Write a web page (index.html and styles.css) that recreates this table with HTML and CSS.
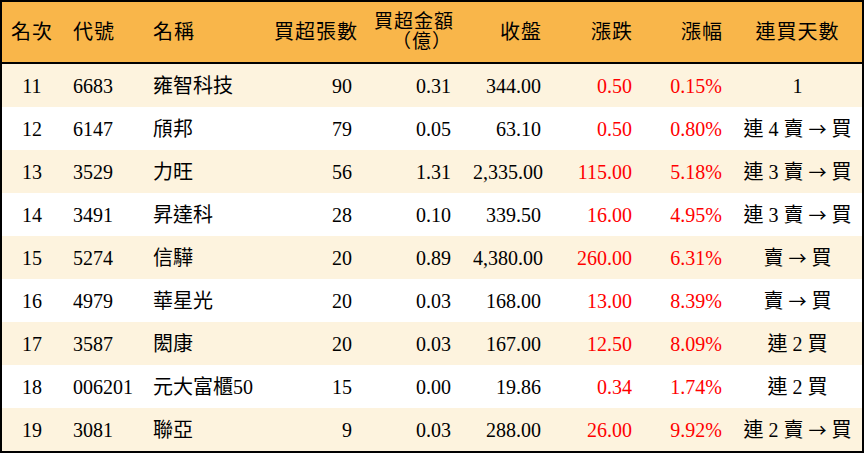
FILE: index.html
```html
<!DOCTYPE html>
<html lang="zh-Hant">
<head>
<meta charset="utf-8">
<link rel="stylesheet" href="styles.css">
</head>
<body>
<div class="board">
  <div class="row head">
    <div class="c c-rank">名次</div>
    <div class="c c-left">代號</div>
    <div class="c c-left">名稱</div>
    <div class="c c-right">買超張數</div>
    <div class="c c-right two">買超金額<br>（億）</div>
    <div class="c c-right">收盤</div>
    <div class="c c-right">漲跌</div>
    <div class="c c-right">漲幅</div>
    <div class="c c-center">連買天數</div>
  </div>
  <div class="row odd">
    <div class="c c-rank">11</div><div class="c c-left">6683</div><div class="c c-left">雍智科技</div>
    <div class="c c-right">90</div><div class="c c-right">0.31</div><div class="c c-right">344.00</div>
    <div class="c c-right up">0.50</div><div class="c c-right up">0.15%</div><div class="c c-center">1</div>
  </div>
  <div class="row">
    <div class="c c-rank">12</div><div class="c c-left">6147</div><div class="c c-left">頎邦</div>
    <div class="c c-right">79</div><div class="c c-right">0.05</div><div class="c c-right">63.10</div>
    <div class="c c-right up">0.50</div><div class="c c-right up">0.80%</div><div class="c c-center">連 4 賣 <span class="arrow">→</span> 買</div>
  </div>
  <div class="row odd">
    <div class="c c-rank">13</div><div class="c c-left">3529</div><div class="c c-left">力旺</div>
    <div class="c c-right">56</div><div class="c c-right">1.31</div><div class="c c-right">2,335.00</div>
    <div class="c c-right up">115.00</div><div class="c c-right up">5.18%</div><div class="c c-center">連 3 賣 <span class="arrow">→</span> 買</div>
  </div>
  <div class="row">
    <div class="c c-rank">14</div><div class="c c-left">3491</div><div class="c c-left">昇達科</div>
    <div class="c c-right">28</div><div class="c c-right">0.10</div><div class="c c-right">339.50</div>
    <div class="c c-right up">16.00</div><div class="c c-right up">4.95%</div><div class="c c-center">連 3 賣 <span class="arrow">→</span> 買</div>
  </div>
  <div class="row odd">
    <div class="c c-rank">15</div><div class="c c-left">5274</div><div class="c c-left">信驊</div>
    <div class="c c-right">20</div><div class="c c-right">0.89</div><div class="c c-right">4,380.00</div>
    <div class="c c-right up">260.00</div><div class="c c-right up">6.31%</div><div class="c c-center">賣 <span class="arrow">→</span> 買</div>
  </div>
  <div class="row">
    <div class="c c-rank">16</div><div class="c c-left">4979</div><div class="c c-left">華星光</div>
    <div class="c c-right">20</div><div class="c c-right">0.03</div><div class="c c-right">168.00</div>
    <div class="c c-right up">13.00</div><div class="c c-right up">8.39%</div><div class="c c-center">賣 <span class="arrow">→</span> 買</div>
  </div>
  <div class="row odd">
    <div class="c c-rank">17</div><div class="c c-left">3587</div><div class="c c-left">閎康</div>
    <div class="c c-right">20</div><div class="c c-right">0.03</div><div class="c c-right">167.00</div>
    <div class="c c-right up">12.50</div><div class="c c-right up">8.09%</div><div class="c c-center">連 2 買</div>
  </div>
  <div class="row">
    <div class="c c-rank">18</div><div class="c c-left">006201</div><div class="c c-left">元大富櫃50</div>
    <div class="c c-right">15</div><div class="c c-right">0.00</div><div class="c c-right">19.86</div>
    <div class="c c-right up">0.34</div><div class="c c-right up">1.74%</div><div class="c c-center">連 2 買</div>
  </div>
  <div class="row odd">
    <div class="c c-rank">19</div><div class="c c-left">3081</div><div class="c c-left">聯亞</div>
    <div class="c c-right">9</div><div class="c c-right">0.03</div><div class="c c-right">288.00</div>
    <div class="c c-right up">26.00</div><div class="c c-right up">9.92%</div><div class="c c-center">連 2 賣 <span class="arrow">→</span> 買</div>
  </div>
</div>
</body>
</html>
```
FILE: styles.css
```css
html, body {
  margin: 0;
  padding: 0;
  background: #ffffff;
}
body {
  font-family: "Liberation Serif", "Noto Sans CJK TC", serif;
  font-size: 20px;
  color: #000000;
}
.board {
  width: 864px;
  height: 453px;
  box-sizing: border-box;
  border: 2px solid #000000;
  overflow: hidden;
}
.row {
  display: grid;
  grid-template-columns: 60px 80px 121px 100px 99px 90px 91px 90px 129px;
  height: 43px;
  align-items: center;
  background: #ffffff;
  line-height: 1;
}
.row.odd {
  background: #fdf3de;
}
.row.head {
  height: 60px;
  background: #f9b64a;
  border-bottom: 2px solid #000000;
}
.head .c {
  letter-spacing: 1px;
}
.c {
  padding: 0 11px;
  white-space: nowrap;
}
.c-rank {
  text-align: center;
  padding: 0;
}
.c-left {
  text-align: left;
}
.c-right {
  text-align: right;
}
.head .c-right {
  margin-right: -1px;
}
.c-center {
  text-align: center;
  padding: 0;
}
.two {
  line-height: 20px;
  font-size: 19px;
}
.arrow {
  font-family: "Noto Sans CJK TC", sans-serif;
  font-size: 18px;
}
.up {
  color: #ff0000;
}
```
